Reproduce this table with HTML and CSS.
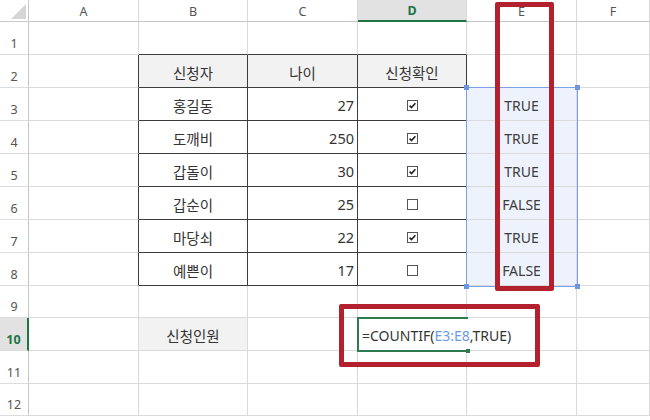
FILE: index.html
```html
<!DOCTYPE html>
<html lang="ko">
<head>
<meta charset="utf-8">
<title>Sheet</title>
<link rel="stylesheet" href="styles.css">
</head>
<body>
<div class="sheet">
  <!-- header row -->
  <div class="corner"><svg width="29" height="22" viewBox="0 0 29 22"><polygon points="26,4 26,19 11,19" fill="#d6d6d6"/></svg></div>
  <div class="ch">A</div>
  <div class="ch">B</div>
  <div class="ch">C</div>
  <div class="ch ch-active">D</div>
  <div class="ch">E</div>
  <div class="ch">F</div>

  <!-- row 1 -->
  <div class="rh">1</div>
  <div class="c"></div>
  <div class="c t-top"></div>
  <div class="c t-top"></div>
  <div class="c t-top"></div>
  <div class="c"></div>
  <div class="c"></div>

  <!-- row 2 -->
  <div class="rh">2</div>
  <div class="c t-left"></div>
  <div class="c tb th">신청자</div>
  <div class="c tb th">나이</div>
  <div class="c tb th">신청확인</div>
  <div class="c"></div>
  <div class="c"></div>

  <!-- row 3 -->
  <div class="rh">3</div>
  <div class="c t-left"></div>
  <div class="c tb">홍길동</div>
  <div class="c tb num">27</div>
  <div class="c tb"><svg class="cb" width="11" height="11" viewBox="0 0 11 11"><rect x="0.5" y="0.5" width="10" height="10" fill="#fff" stroke="#555"/><path d="M2.6 5.6 L4.5 7.6 L8.4 3.2" fill="none" stroke="#222" stroke-width="1.6"/></svg></div>
  <div class="c sel">TRUE</div>
  <div class="c"></div>

  <!-- row 4 -->
  <div class="rh">4</div>
  <div class="c t-left"></div>
  <div class="c tb">도깨비</div>
  <div class="c tb num">250</div>
  <div class="c tb"><svg class="cb" width="11" height="11" viewBox="0 0 11 11"><rect x="0.5" y="0.5" width="10" height="10" fill="#fff" stroke="#555"/><path d="M2.6 5.6 L4.5 7.6 L8.4 3.2" fill="none" stroke="#222" stroke-width="1.6"/></svg></div>
  <div class="c sel">TRUE</div>
  <div class="c"></div>

  <!-- row 5 -->
  <div class="rh">5</div>
  <div class="c t-left"></div>
  <div class="c tb">갑돌이</div>
  <div class="c tb num">30</div>
  <div class="c tb"><svg class="cb" width="11" height="11" viewBox="0 0 11 11"><rect x="0.5" y="0.5" width="10" height="10" fill="#fff" stroke="#555"/><path d="M2.6 5.6 L4.5 7.6 L8.4 3.2" fill="none" stroke="#222" stroke-width="1.6"/></svg></div>
  <div class="c sel">TRUE</div>
  <div class="c"></div>

  <!-- row 6 -->
  <div class="rh">6</div>
  <div class="c t-left"></div>
  <div class="c tb">갑순이</div>
  <div class="c tb num">25</div>
  <div class="c tb"><svg class="cb" width="11" height="11" viewBox="0 0 11 11"><rect x="0.5" y="0.5" width="10" height="10" fill="#fff" stroke="#555"/></svg></div>
  <div class="c sel">FALSE</div>
  <div class="c"></div>

  <!-- row 7 -->
  <div class="rh">7</div>
  <div class="c t-left"></div>
  <div class="c tb">마당쇠</div>
  <div class="c tb num">22</div>
  <div class="c tb"><svg class="cb" width="11" height="11" viewBox="0 0 11 11"><rect x="0.5" y="0.5" width="10" height="10" fill="#fff" stroke="#555"/><path d="M2.6 5.6 L4.5 7.6 L8.4 3.2" fill="none" stroke="#222" stroke-width="1.6"/></svg></div>
  <div class="c sel">TRUE</div>
  <div class="c"></div>

  <!-- row 8 -->
  <div class="rh">8</div>
  <div class="c t-left"></div>
  <div class="c tb">예쁜이</div>
  <div class="c tb num">17</div>
  <div class="c tb"><svg class="cb" width="11" height="11" viewBox="0 0 11 11"><rect x="0.5" y="0.5" width="10" height="10" fill="#fff" stroke="#555"/></svg></div>
  <div class="c sel">FALSE</div>
  <div class="c"></div>

  <!-- row 9 -->
  <div class="rh">9</div>
  <div class="c"></div>
  <div class="c"></div>
  <div class="c"></div>
  <div class="c"></div>
  <div class="c"></div>
  <div class="c"></div>

  <!-- row 10 -->
  <div class="rh rh-active">10</div>
  <div class="c"></div>
  <div class="c label">신청인원</div>
  <div class="c"></div>
  <div class="c edit"><span class="formula">=COUNTIF(<span class="ref">E3:E8</span>,TRUE)</span></div>
  <div class="c"></div>
  <div class="c"></div>

  <!-- row 11 -->
  <div class="rh">11</div>
  <div class="c"></div>
  <div class="c"></div>
  <div class="c"></div>
  <div class="c"></div>
  <div class="c"></div>
  <div class="c"></div>

  <!-- row 12 -->
  <div class="rh">12</div>
  <div class="c"></div>
  <div class="c"></div>
  <div class="c"></div>
  <div class="c"></div>
  <div class="c"></div>
  <div class="c"></div>

  <!-- overlays -->
  <div class="selbox">
    <span class="hd hd-tl"></span>
    <span class="hd hd-tr"></span>
    <span class="hd hd-bl"></span>
    <span class="hd hd-br"></span>
  </div>
  <div class="editbox"><span class="fill-handle"></span></div>
  <div class="mark mark-col"></div>
  <div class="mark mark-formula"></div>
</div>
</body>
</html>
```

FILE: styles.css
```css
* { box-sizing: border-box; }

html, body {
  margin: 0;
  padding: 0;
  background: #ffffff;
  overflow: hidden;
}

.sheet {
  position: relative;
  display: grid;
  grid-template-columns: 29px 110px 109px 110px 109px 110px 73px;
  grid-template-rows: 22px repeat(8, 33px) 32px 33px 33px 32px;
  width: 650px;
  height: 420px;
  font-family: "Noto Sans", "Noto Sans CJK KR", sans-serif;
  color: #333333;
}

.corner {
  background: #ffffff;
  border-right: 1px solid #c9c9c9;
  border-bottom: 1px solid #c9c9c9;
}
.corner svg { display: block; }

.ch {
  display: flex;
  align-items: center;
  justify-content: center;
  font-size: 12.5px;
  color: #555555;
  background: #ffffff;
  border-right: 1px solid #d9d9d9;
  border-bottom: 1px solid #c6c6c6;
  padding-top: 1px;
}
.ch-active {
  background: #e2e2e2;
  color: #217346;
  font-weight: 700;
  border-bottom: 2px solid #217346;
}

.rh {
  display: flex;
  align-items: flex-end;
  justify-content: center;
  font-size: 12.5px;
  color: #555555;
  background: #ffffff;
  border-right: 1px solid #c6c6c6;
  border-bottom: 1px solid #dcdcdc;
  padding-bottom: 2px;
}
.rh-active {
  background: #e2e2e2;
  color: #217346;
  font-weight: 700;
  border-right: 2px solid #217346;
}

.c {
  display: flex;
  align-items: center;
  justify-content: center;
  font-size: 14.5px;
  border-right: 1px solid #dadada;
  border-bottom: 1px solid #dadada;
  padding-top: 2px;
  white-space: nowrap;
}

.t-top { border-bottom-color: #3c3c3c; }
.t-left { border-right-color: #3c3c3c; }
.tb {
  border-right-color: #3c3c3c;
  border-bottom-color: #3c3c3c;
}
.th { background: #f2f2f2; }
.num {
  justify-content: flex-end;
  padding-right: 3px;
}
.cb { display: block; margin-top: 1px; }

.sel {
  background: #edf2fc;
  color: #3d3d3d;
  font-size: 14px;
}

.label { background: #f2f2f2; }

.edit {
  justify-content: flex-start;
  padding-left: 4px;
  border-right-color: transparent;
  overflow: visible;
  position: relative;
  z-index: 1;
}
.formula {
  font-size: 14px;
  color: #333333;
}
.ref { color: #6b9be6; }

/* selection overlay E3:E8 */
.selbox {
  position: absolute;
  left: 466px;
  top: 87px;
  width: 112px;
  height: 200px;
  border: 1px solid #7aa1e4;
  pointer-events: none;
  z-index: 2;
}
.hd {
  position: absolute;
  width: 5px;
  height: 5px;
  background: #6b97e2;
}
.hd-tl { left: -3px; top: -3px; }
.hd-tr { right: -3px; top: -3px; }
.hd-bl { left: -3px; bottom: -3px; }
.hd-br { right: -3px; bottom: -3px; }

/* editing cell D10 */
.editbox {
  position: absolute;
  left: 357px;
  top: 317px;
  width: 111px;
  height: 35px;
  border-top: 2px solid #2e7b50;
  border-left: 2px solid #2e7b50;
  border-bottom: 2px solid #2e7b50;
  z-index: 2;
}
.fill-handle {
  position: absolute;
  right: -2px;
  bottom: -3px;
  width: 4px;
  height: 4px;
  background: #2e7b50;
}

/* red annotation rectangles */
.mark {
  position: absolute;
  border: 5.5px solid #b3202e;
  border-radius: 2px;
  z-index: 3;
}
.mark-col {
  left: 495px;
  top: 2px;
  width: 59px;
  height: 289px;
}
.mark-formula {
  left: 339px;
  top: 304px;
  width: 201px;
  height: 63px;
}
```
